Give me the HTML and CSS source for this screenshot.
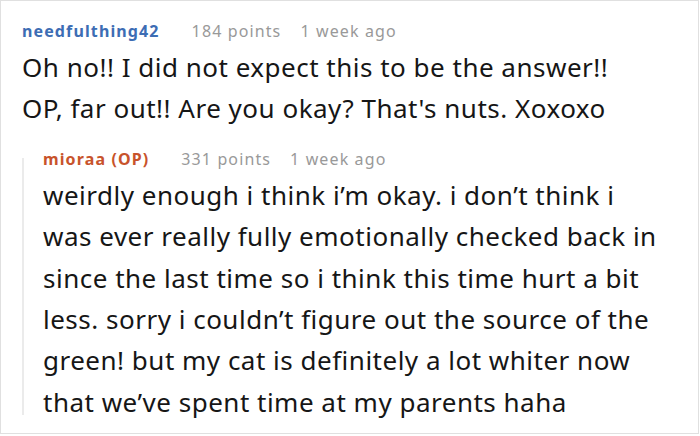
FILE: index.html
```html
<!DOCTYPE html>
<html lang="en">
<head>
  <meta charset="UTF-8">
  <title>Comments</title>
  <link rel="stylesheet" href="styles.css">
</head>
<body>
  <div class="thread">
    <div class="comment">
      <div class="meta">
        <span class="author">needfulthing42</span>
        <span class="points">184 points</span>
        <span class="time">1 week ago</span>
      </div>
      <p class="text">Oh no!! I did not expect this to be the answer!!<br>
        OP, far out!! Are you okay? That's nuts. Xoxoxo</p>

      <div class="comment reply">
        <div class="meta">
          <span class="author op">mioraa (OP)</span>
          <span class="points">331 points</span>
          <span class="time">1 week ago</span>
        </div>
        <p class="text">weirdly enough i think i’m okay. i don’t think i<br>
          was ever really fully emotionally checked back in<br>
          since the last time so i think this time hurt a bit<br>
          less. sorry i couldn’t figure out the source of the<br>
          green! but my cat is definitely a lot whiter now<br>
          that we’ve spent time at my parents haha</p>
      </div>
    </div>
  </div>
</body>
</html>
```

FILE: styles.css
```css
body {
  margin: 0;
  font-family: "Noto Sans", "Open Sans", sans-serif;
  background: #fff;
  color: #161616;
}
.thread {
  width: 699px;
  height: 434px;
  border: 1px solid #e0e0e0;
  box-sizing: border-box;
  padding: 16px 12px 0 21px;
  overflow: hidden;
}
.meta {
  display: flex;
  gap: 19px;
  font-size: 16px;
  line-height: 28px;
  letter-spacing: 0.07em;
}
.author {
  font-weight: bold;
  color: #3d6db4;
  margin-right: 13px;
}
.author.op {
  color: #c8532b;
}
.points, .time {
  color: #999;
}
.text {
  margin: 1.5px 0 0;
  font-size: 26px;
  line-height: 41.4px;
  letter-spacing: 0.5px;
}
.reply {
  position: relative;
  margin-top: 16px;
  padding-left: 21px;
}
.reply::before {
  content: "";
  position: absolute;
  left: 0;
  top: 13px;
  bottom: 8px;
  width: 2px;
  background: #ebebeb;
}
```
